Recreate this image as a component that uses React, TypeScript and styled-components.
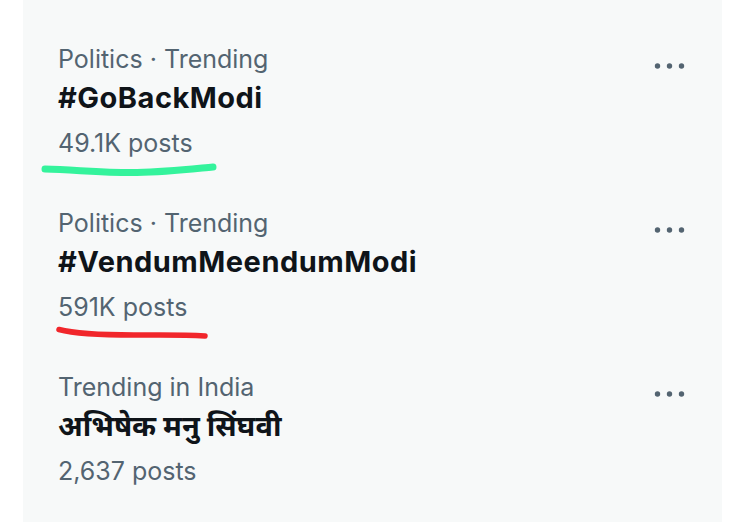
import React from "react";
import styled, { createGlobalStyle } from "styled-components";

const GlobalStyle = createGlobalStyle`
  html, body {
    margin: 0;
    padding: 0;
    background: #ffffff;
  }
  body {
    font-family: Inter, "Noto Sans", "Noto Sans Devanagari", "Lohit Devanagari", sans-serif;
    -webkit-font-smoothing: antialiased;
  }
`;

const Page = styled.div`
  display: flex;
  min-height: 522px;
  padding-left: 23px;
`;

const Panel = styled.section`
  width: 699px;
  background: #f7f9f9;
  padding-top: 18px;
  display: flex;
  flex-direction: column;
`;

const Item = styled.article`
  display: flex;
  justify-content: space-between;
  align-items: flex-start;
  padding: 24px 32px 22px 35px;
`;

const Body = styled.div`
  display: flex;
  flex-direction: column;
  align-items: flex-start;
`;

const Context = styled.div`
  font-size: 25px;
  line-height: 34px;
  color: #536471;
  white-space: nowrap;
`;

/* Latin hashtags get a touch of tracking; Devanagari is left untouched so
   its conjuncts shape normally. */
const Title = styled.div<{ $latin: boolean }>`
  font-size: 29px;
  line-height: 43px;
  font-weight: 700;
  letter-spacing: ${(p) => (p.$latin ? "0.5px" : "0")};
  color: #0f1419;
  white-space: nowrap;
`;

const Count = styled.div`
  position: relative;
  margin-top: 7px;
  font-size: 25px;
  line-height: 34px;
  color: #536471;
  white-space: nowrap;
`;

const Scribble = styled.svg`
  position: absolute;
  left: -16px;
  top: 34px;
  width: 190px;
  height: 18px;
  overflow: visible;
  pointer-events: none;
`;

const MoreButton = styled.button`
  margin-top: 4px;
  width: 40px;
  height: 40px;
  padding: 0;
  border: 0;
  background: transparent;
  display: flex;
  align-items: center;
  justify-content: center;
  cursor: pointer;
`;

type Mark = "green" | "red";

const marks: Record<Mark, { d: string; color: string; width: number }> = {
  green: {
    d: "M3 9 C 35 10, 65 13, 95 12.5 S 150 9, 171 7",
    color: "#34f39c",
    width: 7,
  },
  red: {
    d: "M17 5.5 C 30 9, 60 11, 92 11 S 140 10.5, 163 12",
    color: "#f1262b",
    width: 5.5,
  },
};

type Trend = {
  context: string;
  title: string;
  count: string;
  mark?: Mark;
};

const trends: Trend[] = [
  { context: "Politics · Trending", title: "#GoBackModi", count: "49.1K posts", mark: "green" },
  { context: "Politics · Trending", title: "#VendumMeendumModi", count: "591K posts", mark: "red" },
  { context: "Trending in India", title: "अभिषेक मनु सिंघवी", count: "2,637 posts" },
];

function Dots() {
  return (
    <svg width="40" height="40" viewBox="0 0 40 40" aria-hidden="true">
      <circle cx="7.5" cy="20" r="2.7" fill="#536471" />
      <circle cx="19.5" cy="20" r="2.7" fill="#536471" />
      <circle cx="31.5" cy="20" r="2.7" fill="#536471" />
    </svg>
  );
}

function TrendItem({ trend }: { trend: Trend }) {
  const mark = trend.mark ? marks[trend.mark] : null;
  const latin = /^[\x00-\x7F]*$/.test(trend.title);
  return (
    <Item>
      <Body>
        <Context>{trend.context}</Context>
        <Title $latin={latin}>{trend.title}</Title>
        <Count>
          {trend.count}
          {mark && (
            <Scribble viewBox="0 0 190 18" aria-hidden="true">
              <path
                d={mark.d}
                fill="none"
                stroke={mark.color}
                strokeWidth={mark.width}
                strokeLinecap="round"
                strokeLinejoin="round"
              />
            </Scribble>
          )}
        </Count>
      </Body>
      <MoreButton aria-label="More">
        <Dots />
      </MoreButton>
    </Item>
  );
}

export default function App() {
  return (
    <>
      <GlobalStyle />
      <Page>
        <Panel>
          {trends.map((t) => (
            <TrendItem key={t.title} trend={t} />
          ))}
        </Panel>
      </Page>
    </>
  );
}
